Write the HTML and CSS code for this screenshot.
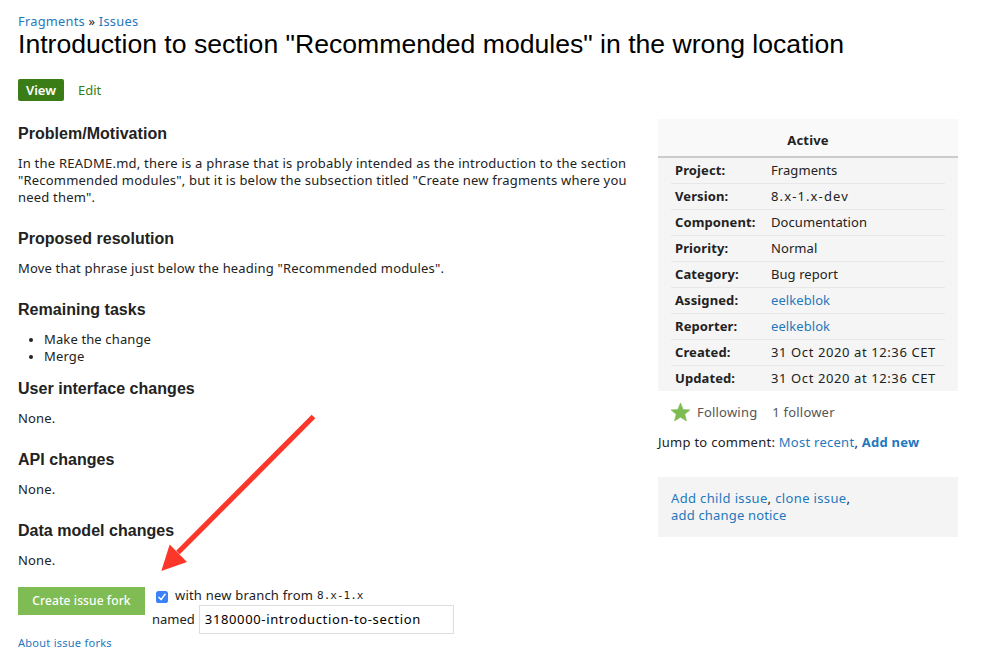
FILE: index.html
```html
<!DOCTYPE html>
<html lang="en">
<head>
<meta charset="utf-8">
<title>Introduction to section "Recommended modules" in the wrong location</title>
<link rel="stylesheet" href="styles.css">
</head>
<body>
<header>
  <nav class="breadcrumb"><a href="#">Fragments</a> » <a href="#">Issues</a></nav>
  <h1>Introduction to section "Recommended modules" in the wrong location</h1>
  <nav class="tabs"><a class="tab active" href="#">View</a><a class="tab" href="#">Edit</a></nav>
</header>
<div class="columns">
  <main>
    <h3>Problem/Motivation</h3>
    <p class="intro"><span class="first">In the README.md, there is a phrase that is probably intended as the introduction to the section</span><br>"Recommended modules", but it is below the subsection titled "Create new fragments where you<br>need them".</p>
    <h3>Proposed resolution</h3>
    <p>Move that phrase just below the heading "Recommended modules".</p>
    <h3>Remaining tasks</h3>
    <ul>
      <li>Make the change</li>
      <li>Merge</li>
    </ul>
    <h3>User interface changes</h3>
    <p>None.</p>
    <h3>API changes</h3>
    <p>None.</p>
    <h3>Data model changes</h3>
    <p class="last">None.</p>
    <form class="fork">
      <button type="button">Create issue fork</button>
      <div class="options">
        <label class="branch">
          <svg class="check" width="12" height="12" viewBox="0 0 12 12"><rect width="12" height="12" rx="2.6" fill="#3b82f7"/><path d="M3 6.4 5.1 8.6 9 3.3" fill="none" stroke="#fff" stroke-width="1.5" stroke-linecap="round" stroke-linejoin="round"/></svg>
          <span>with new branch from</span><code>8.x-1.x</code>
        </label>
        <label class="named"><span>named</span><input type="text" value="3180000-introduction-to-section"></label>
      </div>
    </form>
    <a class="about" href="#">About issue forks</a>
  </main>
  <aside>
    <section class="meta">
      <div class="status">Active</div>
      <dl>
        <div><dt>Project:</dt><dd>Fragments</dd></div>
        <div><dt>Version:</dt><dd class="version">8.x-1.x-dev</dd></div>
        <div><dt>Component:</dt><dd>Documentation</dd></div>
        <div><dt>Priority:</dt><dd>Normal</dd></div>
        <div><dt>Category:</dt><dd>Bug report</dd></div>
        <div><dt>Assigned:</dt><dd><a href="#">eelkeblok</a></dd></div>
        <div><dt>Reporter:</dt><dd><a href="#">eelkeblok</a></dd></div>
        <div><dt>Created:</dt><dd class="date">31 Oct 2020 at 12:36 CET</dd></div>
        <div><dt>Updated:</dt><dd class="date">31 Oct 2020 at 12:36 CET</dd></div>
      </dl>
    </section>
    <div class="follow">
      <svg width="19" height="18" viewBox="0 0 19 18"><path d="M9.5 0 12.2 6.5 19 6.9 13.8 11.3 15.5 18 9.5 14.3 3.5 18 5.2 11.3 0 6.9 6.8 6.5Z" fill="#7dbc52" stroke="#7dbc52" stroke-width=".6"/></svg>
      <span class="following">Following</span><span>1 follower</span>
    </div>
    <div class="jump">Jump to comment: <a href="#">Most recent</a>, <a class="strong" href="#">Add new</a></div>
    <div class="links"><a href="#">Add child issue</a>, <a href="#">clone issue</a>,<br><a class="notice" href="#">add change notice</a></div>
  </aside>
</div>
<svg class="arrow" width="160" height="162" viewBox="0 0 160 162"><path d="M153.5 5.5 18 141.5" stroke="#fc3628" stroke-width="5.2"/><path d="M1.3 160 9.7 133.5 27 151Z" fill="#fc3628"/></svg>
</body>
</html>
```
FILE: styles.css
```css
* { box-sizing: border-box; }
body {
  margin: 0;
  padding: 13px 38px 0 18px;
  height: 663px;
  overflow: hidden;
  background: #fff;
  color: #222;
  font: 13px/17px "Noto Sans", sans-serif;
  letter-spacing: .2px;
}
a { color: #1f78bc; text-decoration: none; }
h1, h3, p, ul, dl, dd { margin: 0; padding: 0; }
h1 {
  font: 26.6px/28px "Liberation Sans", sans-serif;
  letter-spacing: 0;
  white-space: nowrap;
  color: #000;
}
.breadcrumb { font-size: 12.8px; letter-spacing: .26px; }
.tabs { display: flex; gap: 6px; margin-top: 21px; }
.tab {
  padding: 0 8px;
  border-radius: 2px;
  line-height: 22px;
  letter-spacing: 0;
  color: #357f14;
}
.tab.active {
  width: 46px;
  padding: 0;
  text-align: center;
  background: #3a7d16;
  color: #fff;
  font-weight: 600;
}
.columns {
  display: grid;
  grid-template-columns: 622px 300px;
  justify-content: space-between;
  margin-top: 18px;
}
h3 {
  margin-bottom: 11px;
  font: bold 16px/20px "Liberation Sans", sans-serif;
  letter-spacing: .03px;
}
main { padding-top: 5px; }
p { margin-bottom: 23px; white-space: nowrap; letter-spacing: .17px; }
.intro { letter-spacing: .2px; }
.first { letter-spacing: .235px; }
p.last { margin-bottom: 18px; }
ul { margin-bottom: 14px; padding-left: 26px; letter-spacing: .13px; }
li::marker { font-size: 11px; }
.fork { display: flex; gap: 7px; height: 46px; }
button {
  width: 127px;
  height: 28px;
  padding: 0;
  border: 0;
  background: #7fbc54;
  color: #fff;
  font: 500 12px/28px "Noto Sans", sans-serif;
  letter-spacing: .1px;
}
.branch { display: flex; align-items: center; height: 18px; padding-left: 4px; }
.branch span { margin: -2px 4px 0 7px; }
.check { margin-top: 2px; }
code { margin-top: -1px; font: 11px/17px "DejaVu Sans Mono", monospace; letter-spacing: 0; }
.named { display: flex; align-items: center; gap: 4px; letter-spacing: 0; }
input {
  width: 255px;
  height: 29px;
  padding: 0 5px 1px;
  border: 1px solid #ddd;
  color: #000;
  font: 13px "Noto Sans", sans-serif;
  letter-spacing: .64px;
}
.about { display: block; margin-top: 1px; font-size: 11px; letter-spacing: .26px; }
.meta { height: 272px; background: #f5f5f5; }
.status {
  height: 39px;
  padding-top: 3px;
  border-bottom: 2px solid #ccc;
  background: #f9f9f9;
  text-align: center;
  font-weight: bold;
  line-height: 37px;
}
dl { padding: 0 13px; }
dl > div { display: flex; height: 26px; padding-left: 4px; border-bottom: 1px solid #e8e8e8; line-height: 25px; }
dl > div:last-child { border: 0; }
dt { width: 96px; font-weight: bold; letter-spacing: .1px; }
dd { letter-spacing: .07px; }
.date { letter-spacing: .6px; }
.version { letter-spacing: 1.12px; }
.follow { display: flex; align-items: center; height: 18px; margin: 12px 0 0 13px; color: #555; }
.following { margin: 0 15px 0 7px; }
.jump { margin-top: 13px; white-space: nowrap; letter-spacing: .26px; }
.strong { font-weight: bold; }
.links { height: 60px; margin-top: 26px; padding: 13px; background: #f4f4f4; letter-spacing: .36px; }
.notice { letter-spacing: .18px; }
.arrow { position: absolute; left: 160px; top: 411px; }
```
